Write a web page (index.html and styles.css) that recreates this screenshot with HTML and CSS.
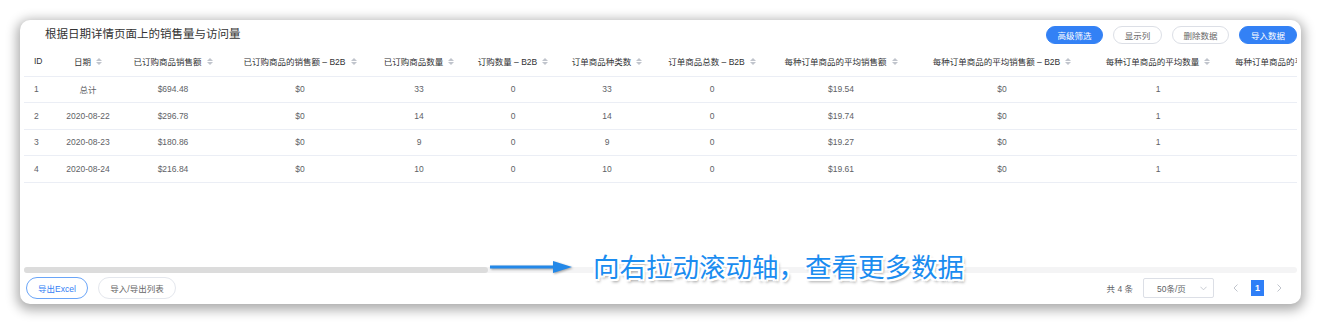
FILE: index.html
```html
<!DOCTYPE html>
<html lang="zh-CN">
<head>
  <meta charset="UTF-8" />
  <title>销售量与访问量</title>
  <link rel="stylesheet" href="styles.css">
</head>
<body>

  <div class="card">

    <!-- Toolbar -->
    <div class="toolbar">
      <h1 class="title">根据日期详情页面上的销售量与访问量</h1>
      <div class="actions">
        <button class="pill primary w57">高级筛选</button>
        <button class="pill w49">显示列</button>
        <button class="pill w57">删除数据</button>
        <button class="pill primary w58">导入数据</button>
      </div>
    </div>

    <!-- Table -->
    <div class="table-wrap">
      <table class="grid">
        <colgroup>
          <col style="width:28px"><col style="width:72px"><col style="width:98px">
          <col style="width:156px"><col style="width:82px"><col style="width:106px">
          <col style="width:82px"><col style="width:128px"><col style="width:130px">
          <col style="width:192px"><col style="width:120px"><col style="width:164px">
        </colgroup>
        <thead>
          <tr>
            <th class="id">ID</th>
            <th>日期<span class="sort"></span></th>
            <th>已订购商品销售额<span class="sort"></span></th>
            <th>已订购商品的销售额 – B2B<span class="sort"></span></th>
            <th>已订购商品数量<span class="sort"></span></th>
            <th>订购数量 – B2B<span class="sort"></span></th>
            <th>订单商品种类数<span class="sort"></span></th>
            <th>订单商品总数 – B2B<span class="sort"></span></th>
            <th>每种订单商品的平均销售额<span class="sort"></span></th>
            <th>每种订单商品的平均销售额 – B2B<span class="sort"></span></th>
            <th>每种订单商品的平均数量<span class="sort"></span></th>
            <th>每种订单商品的平均数量 – B2B<span class="sort"></span></th>
          </tr>
        </thead>
        <tbody>
          <tr>
            <td class="id">1</td><td>总计</td><td>$694.48</td><td>$0</td><td>33</td><td>0</td>
            <td>33</td><td>0</td><td>$19.54</td><td>$0</td><td>1</td><td></td>
          </tr>
          <tr>
            <td class="id">2</td><td>2020-08-22</td><td>$296.78</td><td>$0</td><td>14</td><td>0</td>
            <td>14</td><td>0</td><td>$19.74</td><td>$0</td><td>1</td><td></td>
          </tr>
          <tr>
            <td class="id">3</td><td>2020-08-23</td><td>$180.86</td><td>$0</td><td>9</td><td>0</td>
            <td>9</td><td>0</td><td>$19.27</td><td>$0</td><td>1</td><td></td>
          </tr>
          <tr>
            <td class="id">4</td><td>2020-08-24</td><td>$216.84</td><td>$0</td><td>10</td><td>0</td>
            <td>10</td><td>0</td><td>$19.61</td><td>$0</td><td>1</td><td></td>
          </tr>
        </tbody>
      </table>
    </div>

    <!-- Horizontal scroll bar -->
    <div class="scrollbar"><div class="thumb"></div></div>

    <!-- Footer -->
    <div class="footer">
      <div class="footer-left">
        <button class="pill outline excel">导出Excel</button>
        <button class="pill list">导入/导出列表</button>
      </div>
      <div class="pager">
        <span class="total">共 4 条</span>
        <div class="size">
          <span>50条/页</span>
          <svg class="chev" viewBox="0 0 8 5" width="7" height="5"><polyline points="0.5,0.5 4,4 7.5,0.5" /></svg>
        </div>
        <span class="nav prev"><svg viewBox="0 0 5 8" width="5" height="8"><polyline points="4.5,0.5 1,4 4.5,7.5" /></svg></span>
        <span class="page">1</span>
        <span class="nav next"><svg viewBox="0 0 5 8" width="5" height="8"><polyline points="0.5,0.5 4,4 0.5,7.5" /></svg></span>
      </div>
    </div>

    <!-- Hint overlay -->
    <div class="hint">
      <svg class="arrow" viewBox="0 0 84 14" width="84" height="14">
        <line x1="1" y1="7" x2="68" y2="7" />
        <polygon points="64,1 83,7 64,13" />
      </svg>
      <span class="hint-text">向右拉动滚动轴，查看更多数据</span>
    </div>

  </div>

</body>
</html>
```

FILE: styles.css
```css
/* --- Reset & Layout --- */
* {
  box-sizing: border-box;
  margin: 0;
  padding: 0;
}
body {
  font-family: "Liberation Sans", "Noto Sans CJK SC", sans-serif;
  background: #fff;
  padding: 20px 19px 20px 20px;
  height: 324px;
  overflow: hidden;
}

/* --- Card --- */
.card {
  position: relative;
  height: 284px;
  background: #fff;
  border-radius: 10px;
  box-shadow: 0 3px 12px 3px rgba(0, 0, 0, 0.33);
  padding: 6px 4px 5px;
  display: flex;
  flex-direction: column;
}

/* --- Toolbar --- */
.toolbar {
  height: 18px;
  display: flex;
  align-items: center;
  justify-content: space-between;
  padding-left: 21px;
}
.title {
  font-size: 11.5px;
  font-weight: normal;
  color: #333;
  margin-top: -4px;
}
.actions {
  display: flex;
  gap: 10px;
}

.pill {
  font-family: "Liberation Sans", "Noto Sans CJK SC", sans-serif;
  font-size: 8.5px;
  height: 18px;
  padding: 0;
  border-radius: 9px;
  border: 1px solid #dcdfe6;
  background: #fff;
  color: #666;
  cursor: pointer;
}
.pill.primary {
  background: #3381f5;
  border-color: #3381f5;
  color: #fff;
}
.w49 { width: 49px; }
.w57 { width: 57px; }
.w58 { width: 58px; }

/* --- Table --- */
.table-wrap {
  margin-top: 2px;
  flex: 1;
  overflow: hidden;
}
.grid {
  table-layout: fixed;
  width: 1358px;
  border-collapse: collapse;
  font-size: 8.5px;
  color: #606266;
}
.grid th {
  height: 30px;
  font-weight: normal;
  color: #303133;
  white-space: nowrap;
  text-align: center;
  border-bottom: 1px solid #ebeef5;
  overflow: hidden;
}
.grid td {
  height: 26.6px;
  text-align: center;
  white-space: nowrap;
  border-bottom: 1px solid #ebeef5;
}
.grid .id {
  text-align: left;
  padding-left: 10px;
}

.sort {
  display: inline-flex;
  flex-direction: column;
  gap: 1px;
  margin-left: 5px;
  vertical-align: middle;
  position: relative;
  top: -1px;
}
.sort::before {
  content: "";
  border: 3px solid transparent;
  border-bottom-color: #c0c4cc;
  border-top-width: 0;
}
.sort::after {
  content: "";
  border: 3px solid transparent;
  border-top-color: #c0c4cc;
  border-bottom-width: 0;
}

/* --- Scroll bar --- */
.scrollbar {
  height: 6px;
  background: #f4f4f5;
  border-radius: 3px;
}
.scrollbar .thumb {
  width: 464px;
  height: 100%;
  background: #dcdcdc;
  border-radius: 3px;
}

/* --- Footer --- */
.footer {
  height: 22px;
  margin-top: 4px;
  padding: 0 11px 0 2px;
  display: flex;
  align-items: center;
  justify-content: space-between;
}
.footer-left {
  display: flex;
  gap: 10px;
}
.footer .pill {
  height: 22px;
  border-radius: 11px;
}
.pill.outline {
  border-color: #6aa5f8;
  color: #3381f5;
}
.pill.excel { width: 62px; }
.pill.list { width: 78px; border-color: #e4e7ed; }

.pager {
  display: flex;
  align-items: center;
  font-size: 8.5px;
  color: #606266;
}
.total {
  margin-right: 10px;
}
.size {
  width: 71px;
  height: 20px;
  border: 1px solid #dcdfe6;
  border-radius: 2px;
  display: flex;
  align-items: center;
  justify-content: space-between;
  padding: 0 6px 0 13px;
}
.chev polyline,
.nav polyline {
  fill: none;
  stroke: #c0c4cc;
  stroke-width: 1;
}
.nav {
  width: 14px;
  display: flex;
  justify-content: center;
}
.prev { margin-left: 14px; }
.next { margin-left: 8px; }
.page {
  width: 13px;
  height: 16px;
  margin-left: 9px;
  background: #2f7ff7;
  color: #fff;
  font-weight: bold;
  display: flex;
  align-items: center;
  justify-content: center;
  font-size: 9px;
}

/* --- Hint overlay --- */
.hint {
  position: absolute;
  left: 469px;
  top: 246px;
  transform: translateY(-50%);
  display: flex;
  align-items: center;
}
.arrow {
  margin-top: 2px;
  filter: drop-shadow(1px 1px 1px rgba(0, 0, 0, 0.35));
}
.arrow line {
  stroke: #2388e8;
  stroke-width: 3;
}
.arrow polygon {
  fill: #2388e8;
}
.hint-text {
  margin-left: 20px;
  font-family: "Noto Sans CJK SC", sans-serif;
  font-size: 26.5px;
  line-height: 32px;
  color: #1a8cf0;
  text-shadow:
    1px 0 0 #fff, -1px 0 0 #fff, 0 1px 0 #fff, 0 -1px 0 #fff,
    2px 0 0 #fff, -2px 0 0 #fff, 0 2px 0 #fff, 0 -2px 0 #fff,
    2px 2px 0 #fff, -2px -2px 0 #fff, 2px -2px 0 #fff, -2px 2px 0 #fff,
    2px 3px 3px rgba(0, 0, 0, 0.45);
}
```
